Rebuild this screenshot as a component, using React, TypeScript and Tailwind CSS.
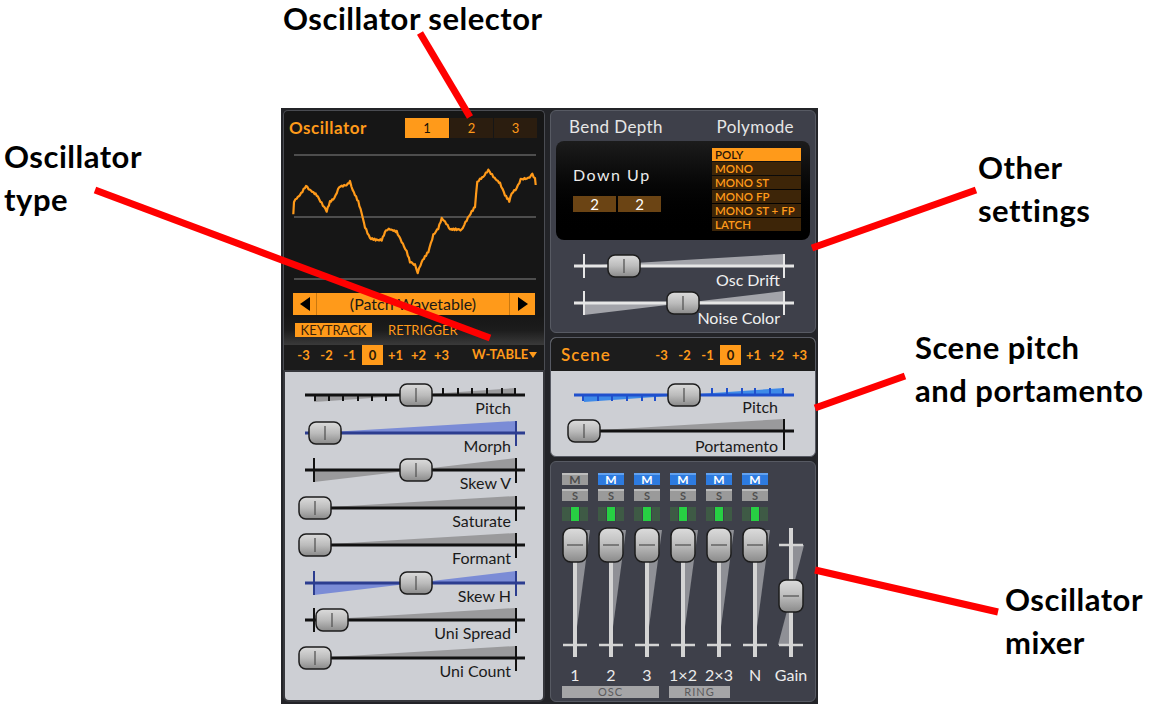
import React from 'react';

type SL = {
  vx: number; vw: number; y: number; x0: number; x1: number; a: number; b: number; kx: number;
  kind: 'uni' | 'bi'; track: string; wedge: string; tick: string; showA?: boolean;
  steps?: { below: number[]; above: number[] }; wh?: number; tickDown?: number; noEnd?: boolean;
};

function Knob({ cx, cy }: { cx: number; cy: number }) {
  return (
    <g>
      <rect x={cx - 16} y={cy - 11} width={32} height={22} rx={7} fill="url(#knobH)" stroke="#1c1c1c" strokeWidth={1.5} />
      <line x1={cx} y1={cy - 7} x2={cx} y2={cy + 7} stroke="#555" strokeWidth={1.3} />
    </g>
  );
}

function HSlider(p: SL) {
  const wh = p.wh ?? 12;
  const td = p.tickDown ?? 13;
  const m = p.kind === 'bi' ? (p.a + p.b) / 2 : p.a;
  return (
    <svg width={p.vw} height={24} viewBox={`${p.vx} ${p.y - 12} ${p.vw} 24`} className="block overflow-visible">
      {p.kind === 'uni' ? (
        <polygon points={`${p.a},${p.y} ${p.b},${p.y - wh} ${p.b},${p.y}`} fill={p.wedge} />
      ) : (
        <>
          <polygon points={`${p.a},${p.y} ${p.a},${p.y + wh} ${m},${p.y}`} fill={p.wedge} />
          <polygon points={`${m},${p.y} ${p.b},${p.y - wh} ${p.b},${p.y}`} fill={p.wedge} />
        </>
      )}
      <line x1={p.x0} y1={p.y} x2={p.x1} y2={p.y} stroke={p.track} strokeWidth={3} />
      {p.steps && p.steps.below.map((x) => <line key={'b' + x} x1={x} y1={p.y} x2={x} y2={p.y + 6} stroke={p.tick} strokeWidth={2} />)}
      {p.steps && p.steps.above.map((x) => <line key={'a' + x} x1={x} y1={p.y - 7} x2={x} y2={p.y} stroke={p.tick} strokeWidth={2} />)}
      {p.showA && <line x1={p.a} y1={p.y - 12} x2={p.a} y2={p.y + 12} stroke={p.tick} strokeWidth={2} />}
      {!p.noEnd && <line x1={p.b} y1={p.y - wh} x2={p.b} y2={p.y + td} stroke={p.tick} strokeWidth={2} />}
      <Knob cx={p.kx} cy={p.y} />
    </svg>
  );
}

const wavePts: [number, number][] = [
  [293.3, 215], [294, 201.7], [296.7, 198.3], [300, 195], [306, 186], [310, 190], [316.7, 195], [321.7, 203.3],
  [326.7, 211], [330, 201.7], [334.3, 198.3], [339.3, 186.7], [346.7, 185], [350, 181.7], [352.7, 190], [358.3, 201.7],
  [361.7, 213.3], [365, 227.3], [370, 238.3], [376.7, 240], [381.7, 240], [386, 230], [390, 229.3], [396.7, 231.7],
  [401.7, 241.7], [406.7, 251.7], [410, 261.7], [415, 265], [417.7, 272.7], [421.7, 261.7], [428.3, 251.7], [433.3, 235],
  [438.3, 228.3], [441.7, 218.3], [445, 221.7], [450, 229.3], [456.7, 229.3], [461.7, 230], [466.7, 220], [471.7, 211.7],
  [475, 206.7], [477.3, 181.7], [480, 179.3], [483.3, 176.7], [488.3, 170], [493.3, 176.7], [500, 183.3], [505, 195],
  [509.3, 201], [511.7, 193.3], [516.7, 188.3], [520.7, 179.3], [528.3, 178.3], [532.3, 174.3], [535, 178.3], [535.7, 185],
];

function wavePath() {
  const out: string[] = [];
  for (let i = 0; i < wavePts.length - 1; i++) {
    const [x0, y0] = wavePts[i];
    const [x1, y1] = wavePts[i + 1];
    const n = Math.max(1, Math.round(Math.abs(x1 - x0) / 1.2));
    for (let k = 0; k < n; k++) {
      const t = k / n;
      const x = x0 + (x1 - x0) * t;
      const y = y0 + (y1 - y0) * t + Math.sin(x * 3.1) * 0.8;
      out.push(`${x.toFixed(1)},${y.toFixed(1)}`);
    }
  }
  const l = wavePts[wavePts.length - 1];
  out.push(`${l[0]},${l[1]}`);
  return out.join(' ');
}

const pitchItems = ['-3', '-2', '-1', '0', '+1', '+2', '+3'];

function PitchButtons() {
  return (
    <div className="flex">
      {pitchItems.map((t) =>
        t === '0' ? (
          <div key={t} className="w-[23px] h-[20px] flex justify-center">
            <div className="w-[21px] h-[20px] bg-[#ff9a1a] text-[#2a1806] text-[13px] font-bold leading-[20px] text-center">0</div>
          </div>
        ) : (
          <div key={t} className="w-[23px] h-[20px] text-[#ff9a1a] text-[13px] font-bold leading-[20px] text-center whitespace-nowrap">{t}</div>
        )
      )}
    </div>
  );
}

function SliderRow({ s, label, pr, color, h }: { s: SL; label: string; pr: string; color: string; h: string }) {
  return (
    <div className={`flex flex-col ${h}`}>
      <HSlider {...s} />
      <div className={`-mt-[7px] h-[16px] leading-[16px] text-[16px] text-right ${pr} ${color}`}>{label}</div>
    </div>
  );
}

function LeftCol() {
  const base = { vx: 285, vw: 258, x0: 305, x1: 525, a: 314, b: 516, wedge: '#9a9a9c', track: '#111', tick: '#111' };
  const blue = { track: '#2c3d8f', wedge: '#7b8cd6', tick: '#2c3d8f' };
  const rows: { s: SL; label: string }[] = [
    { label: 'Pitch', s: { ...base, y: 395, kx: 416, kind: 'bi', wh: 7, noEnd: true, steps: { below: [315, 329, 343, 358, 372, 386], above: [443, 458, 472, 487, 502, 515] } } },
    { label: 'Morph', s: { ...base, ...blue, y: 432.5, kx: 325, kind: 'uni' } },
    { label: 'Skew V', s: { ...base, y: 470, kx: 416, kind: 'bi', showA: true } },
    { label: 'Saturate', s: { ...base, y: 507.5, kx: 315, kind: 'uni' } },
    { label: 'Formant', s: { ...base, y: 545, kx: 315, kind: 'uni' } },
    { label: 'Skew H', s: { ...base, ...blue, y: 582.5, kx: 416, kind: 'bi', showA: true } },
    { label: 'Uni Spread', s: { ...base, y: 620, kx: 332, kind: 'uni', showA: true } },
    { label: 'Uni Count', s: { ...base, y: 657.5, kx: 315, kind: 'uni' } },
  ];
  return (
    <div className="w-[262px] flex flex-col">
      <div className="h-[235px] bg-[#161616] border border-b-0 border-[#4a4c52] rounded-t-[5px] flex flex-col">
        <div className="h-[33px] flex items-center justify-between pl-[5px] pr-[7px]">
          <div className="text-[#ff9a1a] text-[17px] font-bold tracking-[0.5px]">Oscillator</div>
          <div className="flex gap-[1px] h-[20px]">
            <div className="w-[44px] bg-[#ff9a1a] text-[#1a1206] text-[13px] leading-[20px] text-center">1</div>
            <div className="w-[43px] bg-[#2b1d0f] text-[#ff9a1a] text-[13px] leading-[20px] text-center">2</div>
            <div className="w-[43px] bg-[#2b1d0f] text-[#ff9a1a] text-[13px] leading-[20px] text-center">3</div>
          </div>
        </div>
        <svg width={260} height={146} viewBox="284 144 260 146" className="block">
          <line x1={294} y1={155} x2={536} y2={155} stroke="#4d4d4d" strokeWidth={2} />
          <line x1={294} y1={217} x2={536} y2={217} stroke="#4d4d4d" strokeWidth={2} />
          <line x1={294} y1={279} x2={536} y2={279} stroke="#4d4d4d" strokeWidth={2} />
          <polyline points={wavePath()} fill="none" stroke="#ff9a1a" strokeWidth={2.2} strokeLinejoin="round" />
        </svg>
        <div className="mt-[3px] mx-[9px] h-[22px] bg-[#ff9a1a] flex">
          <div className="w-[24px] flex items-center justify-center border-r border-[#c9780f]">
            <svg width="10" height="14" viewBox="0 0 10 14"><polygon points="10,0 0,7 10,14" fill="#000" /></svg>
          </div>
          <div className="flex-1 text-center text-[16px] leading-[22px] text-[#1c1a16]">(Patch Wavetable)</div>
          <div className="w-[26px] flex items-center justify-center border-l border-[#c9780f]">
            <svg width="10" height="14" viewBox="0 0 10 14"><polygon points="0,0 10,7 0,14" fill="#000" /></svg>
          </div>
        </div>
        <div className="h-[30px] pt-[8px] bg-gradient-to-b from-[#161616] via-[#1c1c1c] to-[#3a3a3a]">
          <div className="flex items-center h-[14px] pl-[11px]">
            <div className="w-[77px] h-[14px] bg-[#ff9a1a] text-[#3a2208] text-[13px] leading-[14px] text-center">KEYTRACK</div>
            <div className="ml-[16px] text-[#ff9a1a] text-[13px] leading-[14px]">RETRIGGER</div>
          </div>
        </div>
      </div>
      <div className="h-[25px] bg-[#1b1b1b] border-x border-[#4a4c52] flex items-start pl-[8px]">
        <PitchButtons />
        <div className="ml-[19px] flex items-center h-[20px] text-[#ff9a1a] text-[13px] font-bold">
          W-TABLE
          <svg width="8" height="6" viewBox="0 0 8 6" className="ml-[1px]"><polygon points="0,0 8,0 4,6" fill="#ff9a1a" /></svg>
        </div>
      </div>
      <div className="h-[332px] bg-[#cdcfd4] border-2 border-[#36373c] rounded-b-[6px] pt-[11px] flex flex-col">
        {rows.map((r) => (
          <SliderRow key={r.label} s={r.s} label={r.label} pr="pr-[32px]" color="text-[#1a1a1a]" h="h-[37.5px]" />
        ))}
      </div>
    </div>
  );
}

const modes = ['POLY', 'MONO', 'MONO ST', 'MONO FP', 'MONO ST + FP', 'LATCH'];

function FaderV({ gain }: { gain?: boolean }) {
  if (gain) {
    return (
      <svg width={36} height={138} viewBox="0 0 36 138" className="block">
        <polygon points="18,21 31,21 18,72" fill="#8f9096" />
        <polygon points="18,72 5,121 18,121" fill="#8f9096" />
        <rect x={16} y={4} width={4} height={129} fill="#d4d4d4" />
        <line x1={6} y1={21} x2={30} y2={21} stroke="#d4d4d4" strokeWidth={2.5} />
        <line x1={6} y1={121} x2={30} y2={121} stroke="#d4d4d4" strokeWidth={2.5} />
        <rect x={6} y={56} width={24} height={32} rx={7} fill="url(#knobH)" stroke="#1c1c1c" strokeWidth={1.5} />
        <line x1={10} y1={72} x2={26} y2={72} stroke="#555" strokeWidth={1.3} />
      </svg>
    );
  }
  return (
    <svg width={36} height={138} viewBox="0 0 36 138" className="block">
      <polygon points="18,6 33,6 18,118" fill="#8f9096" />
      <rect x={16} y={4} width={4} height={129} fill="#d4d4d4" />
      <line x1={6} y1={121} x2={30} y2={121} stroke="#d4d4d4" strokeWidth={2.5} />
      <rect x={6} y={4} width={24} height={34} rx={8} fill="url(#knobH)" stroke="#1c1c1c" strokeWidth={1.5} />
      <line x1={10} y1={21} x2={26} y2={21} stroke="#555" strokeWidth={1.3} />
    </svg>
  );
}

const mixCols = ['1', '2', '3', '1×2', '2×3', 'N'];

function RightCol() {
  const rb = { vx: 551, vw: 264, x0: 574, x1: 794, a: 584, b: 784 };
  return (
    <div className="w-[266px] flex flex-col gap-[4px]">
      <div className="h-[223px] bg-[#3e404a] border border-[#575a63] rounded-[6px] flex flex-col">
        <div className="h-[30px] flex items-center justify-between pl-[18px] pr-[21px] pt-[1px] text-[17px] tracking-[0.4px] text-[#e6e6e6]">
          <div>Bend Depth</div>
          <div>Polymode</div>
        </div>
        <div className="mx-[5px] h-[99px] rounded-[8px] bg-gradient-to-b from-[#1c1c1c] to-[#000] flex justify-between">
          <div className="pl-[17px] pt-[24px] flex flex-col">
            <div className="h-[20px] leading-[20px] text-[16px] tracking-[1.5px] text-[#ececec]">Down Up</div>
            <div className="mt-[11px] flex gap-[2px]">
              <div className="w-[43px] h-[16px] bg-[#6b4414] text-white text-[15px] leading-[16px] text-center">2</div>
              <div className="w-[43px] h-[16px] bg-[#6b4414] text-white text-[15px] leading-[16px] text-center">2</div>
            </div>
          </div>
          <div className="pt-[7px] pr-[9px]">
            <div className="w-[89px] flex flex-col gap-[1px]">
              {modes.map((m, i) => (
                <div key={m} className={`h-[13px] leading-[13px] pl-[3px] text-[11.5px] font-semibold whitespace-nowrap ${i === 0 ? 'bg-[#ff9a1a] text-[#2a1606]' : 'bg-[#3d2508] text-[#ff9a1a]'}`}>{m}</div>
              ))}
            </div>
          </div>
        </div>
        <div className="mt-[14px] flex flex-col">
          <HSlider {...rb} y={266} kx={624} kind="uni" showA track="#e6e6e6" wedge="#a3a4aa" tick="#e6e6e6" tickDown={12} />
          <div className="-mt-[6px] h-[16px] leading-[16px] text-[16px] text-right pr-[35px] text-[#f0f0f0]">Osc Drift</div>
        </div>
        <div className="mt-[3px] flex flex-col">
          <HSlider {...rb} y={303} kx={683} kind="bi" showA track="#e6e6e6" wedge="#a3a4aa" tick="#e6e6e6" tickDown={12} />
          <div className="-mt-[5px] h-[16px] leading-[16px] text-[16px] text-right pr-[35px] text-[#f0f0f0]">Noise Color</div>
        </div>
      </div>

      <div className="h-[120px] bg-[#cdcfd4] border border-[#575a63] rounded-[6px] overflow-hidden flex flex-col">
        <div className="h-[33px] bg-[#1c1c1c] flex items-center justify-between pl-[10px] pr-[4px]">
          <div className="text-[#ff9a1a] text-[17px] font-semibold tracking-[1px]">Scene</div>
          <PitchButtons />
        </div>
        <div className="pt-[12px] flex flex-col">
          <HSlider {...rb} y={396} kx={684} kind="bi" wh={7} noEnd track="#2050cc" wedge="#3e8ae8" tick="#2050cc" steps={{ below: [583, 598, 612, 627, 642, 655], above: [712, 727, 742, 755, 770, 783] }} />
          <div className="-mt-[8px] h-[16px] leading-[16px] text-[16px] text-right pr-[37px] text-[#1a1a1a]">Pitch</div>
          <div className="mt-[4px]">
            <HSlider {...rb} y={433} kx={584} kind="uni" track="#111" wedge="#9a9a9c" tick="#111" tickDown={19} />
          </div>
          <div className="-mt-[5px] h-[16px] leading-[16px] text-[16px] text-right pr-[37px] text-[#1a1a1a]">Portamento</div>
        </div>
      </div>

      <div className="h-[241px] bg-[#3e404a] border border-[#575a63] rounded-[6px] pt-[11px] flex flex-col">
        <div className="flex pl-[6px]">
          {[...mixCols, 'Gain'].map((c, i) => (
            <div key={c} className="w-[36px] flex flex-col items-center">
              {i < 6 ? (
                <>
                  <div className={`w-[26px] h-[12px] text-[12px] font-bold leading-[10px] text-center border-t-2 ${i === 0 ? 'bg-[#9a9a9a] border-[#bdbdbd] text-[#4d4d4d]' : 'bg-[#2d7be0] border-[#62a2f0] text-white'}`}>M</div>
                  <div className="mt-[4px] w-[26px] h-[12px] text-[11px] font-bold leading-[10px] text-center border-t-2 bg-[#9a9a9a] border-[#bdbdbd] text-[#505050]">S</div>
                  <div className="mt-[6px] flex gap-[1px]">
                    <div className="w-[8px] h-[14px] bg-[#3e5a45]" />
                    <div className="w-[8px] h-[14px] bg-[#27d043]" />
                    <div className="w-[8px] h-[14px] bg-[#3e5a45]" />
                  </div>
                  <div className="mt-[3px]"><FaderV /></div>
                </>
              ) : (
                <div className="mt-[51px]"><FaderV gain /></div>
              )}
              <div className="mt-[4px] h-[18px] leading-[18px] text-[16px] text-[#ececec] whitespace-nowrap">{c}</div>
            </div>
          ))}
        </div>
        <div className="mt-[2px] flex pl-[11px]">
          <div className="w-[97px] h-[12px] bg-[#a5a5a7] text-[#5a5a5c] text-[11px] leading-[12px] text-center tracking-[1px]">OSC</div>
          <div className="ml-[10px] w-[61px] h-[12px] bg-[#a5a5a7] text-[#5a5a5c] text-[11px] leading-[12px] text-center tracking-[1px]">RING</div>
        </div>
      </div>
    </div>
  );
}

function Annotations() {
  const cls = "absolute text-[31px] leading-[43px] tracking-[0.5px] font-bold text-black whitespace-nowrap font-['Lato',sans-serif]";
  return (
    <>
      <div className="absolute left-[283px] top-0 text-[31px] leading-[36px] tracking-[0.5px] font-bold text-black whitespace-nowrap font-['Lato',sans-serif]">Oscillator selector</div>
      <div className={`${cls} left-[4px] top-[135px]`}>Oscillator<br />type</div>
      <div className={`${cls} left-[978px] top-[146px]`}>Other<br />settings</div>
      <div className={`${cls} left-[915px] top-[326px]`}>Scene pitch<br />and portamento</div>
      <div className={`${cls} left-[1005px] top-[578px]`}>Oscillator<br />mixer</div>
      <svg className="absolute left-0 top-0 pointer-events-none" width={1150} height={710} viewBox="0 0 1150 710">
        <g stroke="#ff0000" strokeWidth={7}>
          <line x1={420} y1={33} x2={470} y2={117} />
          <line x1={95} y1={190} x2={490} y2={338} />
          <line x1={812} y1={248} x2={976} y2={190} />
          <line x1={815} y1={408} x2={905} y2={376} />
          <line x1={815} y1={570} x2={998} y2={612} />
        </g>
      </svg>
    </>
  );
}

export default function App() {
  return (
    <div className="relative w-[1150px] h-[710px] bg-white overflow-hidden font-['Lato',sans-serif]">
      <svg width="0" height="0" className="absolute">
        <defs>
          <linearGradient id="knobH" x1="0" y1="0" x2="0" y2="1">
            <stop offset="0" stopColor="#dcdcdc" />
            <stop offset="0.5" stopColor="#bcbcbc" />
            <stop offset="1" stopColor="#8a8a8a" />
          </linearGradient>
        </defs>
      </svg>
      <div className="pl-[281px] pt-[108px]">
        <div className="w-[537px] h-[596px] bg-[#232428] p-[2px] flex gap-[5px]">
          <LeftCol />
          <RightCol />
        </div>
      </div>
      <Annotations />
    </div>
  );
}
